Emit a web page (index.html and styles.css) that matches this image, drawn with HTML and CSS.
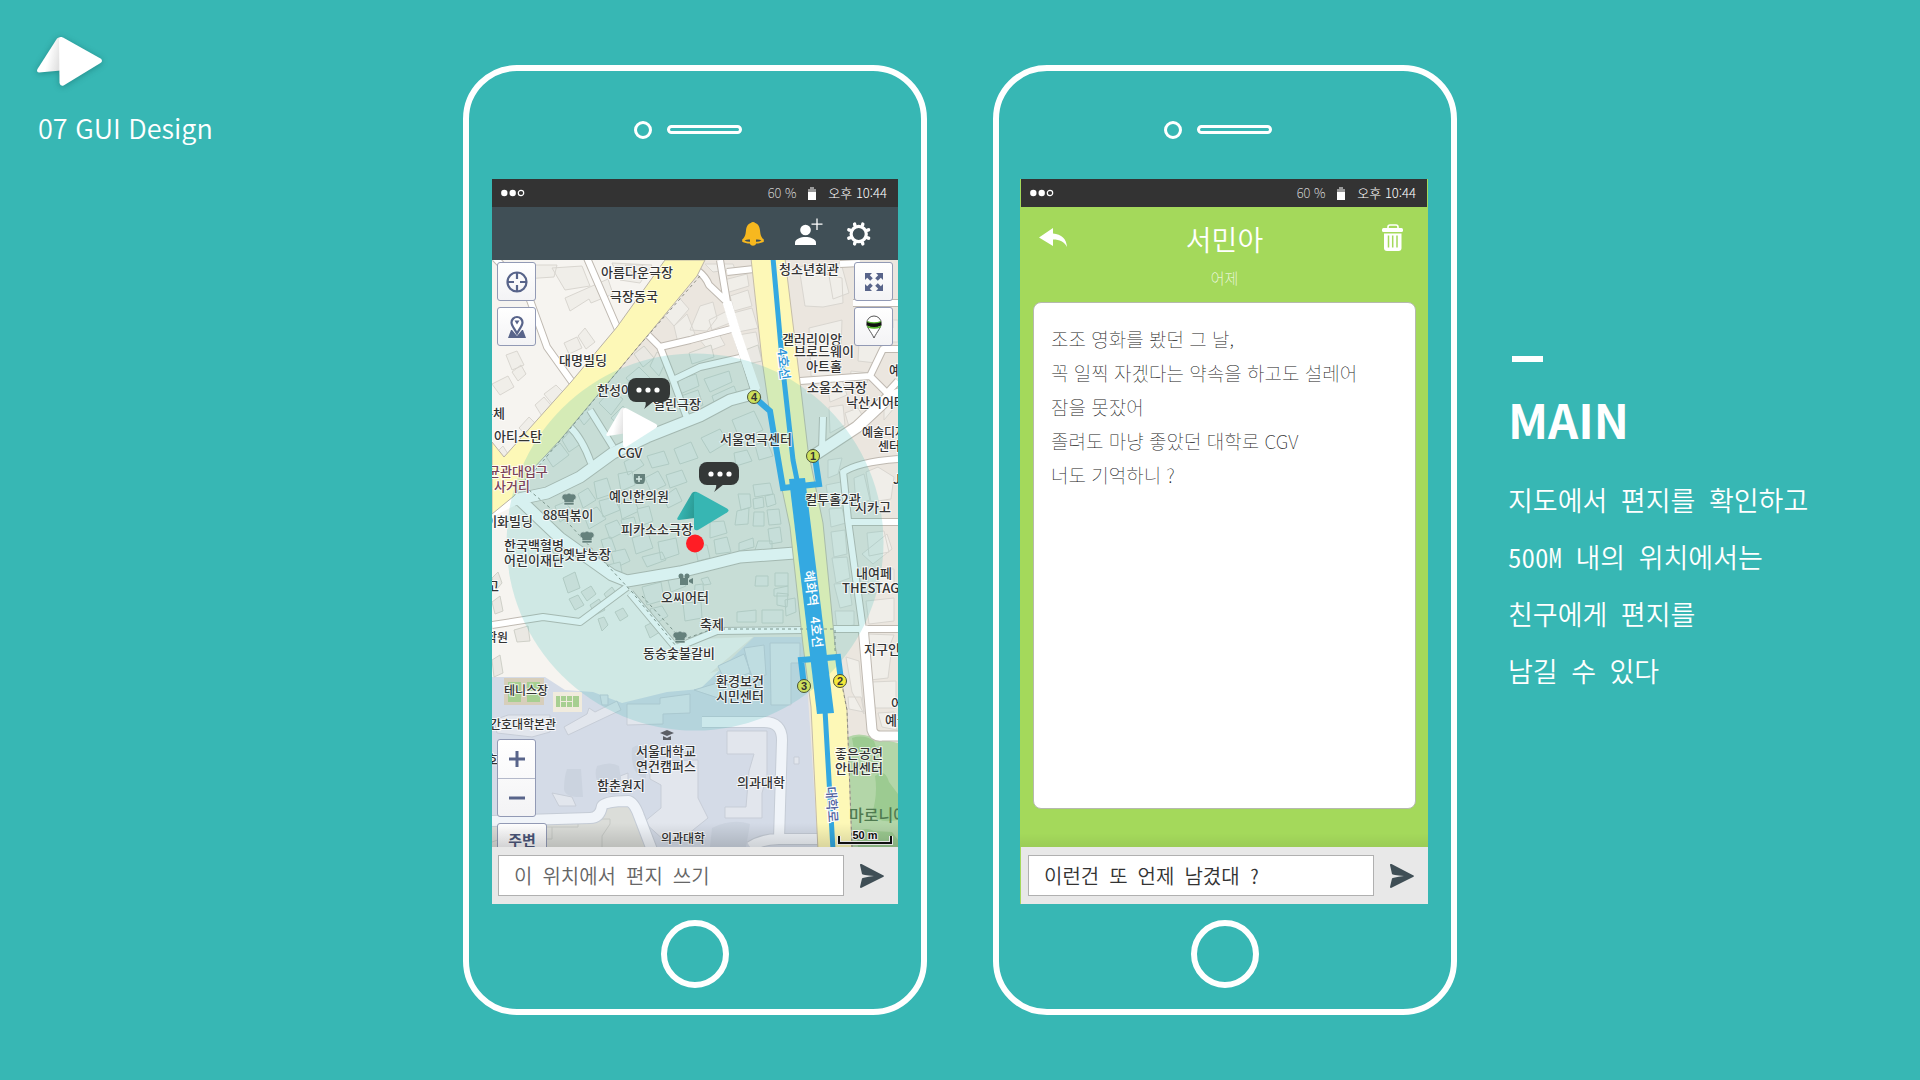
FILE: index.html
```
<!DOCTYPE html>
<html lang="ko">
<head>
<meta charset="utf-8">
<meta name="viewport" content="width=device-width, initial-scale=1">
<title>07 GUI Design</title>
<link rel="stylesheet" href="styles.css">
</head>
<body>
<main class="page">
  <header class="brand">
    <svg class="brand-logo" width="76" height="62" viewBox="31 31 76 62" aria-hidden="true">
      <defs>
        <linearGradient id="fold" x1="0" y1="0" x2="1" y2="0.3"><stop offset="0.55" stop-color="#fff"/><stop offset="1" stop-color="#e2e2e2"/></linearGradient>
        <linearGradient id="foldTeal" x1="0" y1="0" x2="1" y2="0.3"><stop offset="0.3" stop-color="#37b6b3"/><stop offset="1" stop-color="#2b9a94"/></linearGradient>
      </defs>
      <path d="M57 38.500Q59 36.500 62 37L61 70.500L39 72.500Q36 72 37.500 69Z" fill="url(#fold)"/>
      <path d="M59 39Q60 36 63.500 37.800L100.500 58.500Q103.500 60.500 100.500 63L64 85.200Q60.500 87 59.500 83Z" fill="#fff"/>
    </svg>
    <h1 class="brand-title">07 GUI Design</h1>
  </header>

  <div class="phones">
    <section class="phone">
      <div class="phone-top"><span class="camera"></span><span class="speaker"></span></div>
      <div class="screen">
        <div class="status">
          <svg width="24" height="8" viewBox="0 0 24 8" aria-hidden="true"><circle cx="3.300" cy="4" r="3.200" fill="#fff"/><circle cx="11.700" cy="4" r="3.200" fill="#fff"/><circle cx="20" cy="4" r="2.700" fill="none" stroke="#fff" stroke-width="1.200"/></svg>
          <span class="battery-text">60 %</span>
          <svg width="8" height="13" viewBox="0 0 8 13" aria-hidden="true"><path d="M2 0h4v2h2v3H0V2h2z" fill="#999"/><path d="M0 5h8v8H0z" fill="#fff"/></svg>
          <span class="clock">오후 10:44</span>
        </div>
        <div class="toolbar">
          <button class="icon-button" type="button" aria-label="알림">
            <svg width="32" height="32" viewBox="0 0 32 32"><path d="M14 4.700c4.500 0 6.500 3 7 7.500.5 5 1 6.800 3.800 9.300v2.200c-2.300 1.300-4.800 1.700-7.600 1.900-1.200 3-5.200 3-6.400 0-2.800-.2-5.300-.6-7.600-1.900v-2.200c2.800-2.500 3.300-4.300 3.800-9.300.5-4.500 2.500-7.500 7-7.500z" fill="#f7b81f"/><circle cx="14" cy="6.500" r="2.600" fill="#f7b81f"/><path d="M5.500 22.500q2.500-1.500 5.500-1v2.300q-3 .2-5.500-1.300zM22.500 22.500q-2.500-1.500-5.500-1v2.300q3 .2 5.500-1.300z" fill="#404f56"/></svg>
          </button>
          <button class="icon-button" type="button" aria-label="친구 추가">
            <svg width="32" height="32" viewBox="0 0 32 32"><circle cx="14.500" cy="12" r="5.300" fill="#fff"/><path d="M4 27v-2.500c0-3.500 6-5.500 10.500-5.500S25 21 25 24.500V27z" fill="#fff"/><path d="M26 .500v11.500M20.500 6.200h11" stroke="#fff" stroke-width="1.300"/></svg>
          </button>
          <button class="icon-button" type="button" aria-label="설정">
            <svg width="32" height="32" viewBox="0 0 32 32"><g transform="translate(15.700 16)"><circle r="7.600" fill="none" stroke="#fff" stroke-width="3.200"/><g stroke="#fff" stroke-width="3.400" stroke-linecap="round"><path d="M3.800 -8.800l.3 -1.100M8.800 -3.800l1.100 -.4M8.800 3.800l1.100 .4M3.800 8.800l.3 1.100M-3.800 8.800l-.3 1.100M-8.800 3.800l-1.100 .4M-8.800 -3.800l-1.100 -.4M-3.800 -8.800l-.3 -1.100"/></g></g></svg>
          </button>
        </div>

        <div class="map">
          <svg class="map-art" viewBox="0 0 406 587" preserveAspectRatio="xMidYMid slice" role="img" aria-label="혜화역 주변 지도">
            <rect width="406" height="587" fill="#f6f4f0"/>
            <path d="M213 0H406V587H311V385L130 440L110 420L135 320L22 238Z" fill="#ebe6df"/>
            <path d="M22 238L135 325L180 380L261 377L198 430L130 443L53 417L0 417V254Z" fill="#f6f4f0"/>
            <path d="M0 417H53L73 430L101 432L130 443L175 432L208 429L262 377H312L326 587H0Z" fill="#d4dbe7"/>
            <path d="M0 562L105 560L114 544H137L157 587H0Z" fill="#dbddd9"/>
            <path d="M356 477Q366 472 380 477L406 483V587H360Z" fill="#b3d6a8"/>
            <path d="M360 478q12-4 22 3l4 12q-14 4-24-4zM383 516q10-8 14 6l9 12v26q-20 4-26-6 6-20 3-38zM364 574q8-8 18-3l18 1 6 8v7h-40z" fill="#9ccb91"/>
            <g fill="#f0eee9" stroke="#d9d6d0" stroke-width="1">
              <path d="M73 38l43-19 5 15-22 9-2-4-19 12zM72 83l13-6 5 11-13 6zM86 76l7-8 10 14-9 7zM14 95l11-4 7 14-12 5zM20 112l9-7 5 9-8 7zM0 124l16-8 6 11-14 8zM52 134l12-9 12 12-11 13zM43 145l9-8 12 14-11 10zM27 168l10-11 14 14-8 12zM3 194l8-8 5 8-8 9zM17 5h48l-3 12-30 2zM60 8l30-2 8 20-25 4zM120 3l40 2-12 18-20-3z"/>
              <path d="M133 5l18 0-8 11zM168 50l16-16 13 15-15 17zM182 66l13-12 8 20-17 9zM198 70l10-24 13-4 4 16-10 13zM213 4h28l2 5-22 3zM217 60l24-12 2 13-23 9zM232 20l23-6 2 12-23 7zM238 36l18-6 4 16-18 5zM241 53l19-5 6 20-20 4zM246 75l18-3 5 23-18 4zM207 79l10 12 16-6-6-11z"/>
              <path d="M313 46L307 7l15-3 11 10 17 4 1 25-20 4zM317 68l33-8-2 59-29-3zM335 4l14-1 8 30-16 6zM363 52h32v22l-30 7zM367 82l25 1-8 20-18-2zM359 111l18 2-2 10-17-3zM392 138l10-10v20l-10 12zM335 123l15-3 5 15-17 7zM337 147l14-2 2 20-15 8zM353 153l13-5 7 12-15 10zM400 60h6v22h-12zM381 61h20v7h-20z"/>
              <path d="M336 200l14-2-4 16-10 4zM334 225l15-3 5 16-17 6zM337 249l13-1 4 15-15 4zM339 272l14-2 2 24-13 3zM340 298l15-1 3 21-14 5zM342 324l15-1 3 22-12 3zM343 351h19v14l-17 3zM374 212l12-5 16 10-3 22-20 3zM362 218l10-4 6 26-14 5zM370 294l25-20 5 15-19 15zM376 309h26v20l-26 5zM374 341l28-3v23l-25 3zM375 273l17-2 5 21-20 4z"/>
              <path d="M354 397l6 35 12 22-5-53zM356 437h13l3 15-15-3zM376 386h24l-4 32-18 2zM380 422l24-1v27h-21zM386 453l16-1 3 18-15-3zM376 374l26 1-4 10-21-1z"/>
            </g>
            <g fill="#eae8e3" stroke="#cfd0c8" stroke-width="1">
              <path d="M53 195l15-12 9 12-16 12zM70 180l10-11 10 14-13 9zM84 154l10-10 6 12-8 9zM107 143l12-13 12 9-12 16zM119 158l12-12 10 12-8 13zM134 118l13-11 16 16-14 12zM142 94l10-8 10 12-11 9zM165 92l10 7-8 17-9-10zM186 120l18-6 3 12-19 8zM189 136l17-6 5 15-18 8zM212 119l25-8 3 11-22 10zM220 136l22-10 4 10-23 9zM253 90l13-5 4 16-14 3zM197 93l22-8 3 12-22 7z"/>
              <path d="M132 202l13-7 7 10-16 10zM155 196l17-5 5 13-17 4zM182 189l17-7 7 16-18 6zM209 178l19-9 8 13-18 11zM240 160l22-9 9 19-23 10zM126 214l14-3 3 14-14 6zM102 222l13-4 5 16-15 5zM86 234l10-6 8 12-13 8zM63 246l10-4 9 11-14 9zM91 253l14-6 9 12-17 10zM107 241l15-4 6 13-17 7zM127 244l15-5 5 12-17 8zM153 218l13-7 8 14-15 7zM174 215l16-5 5 12-17 6zM171 237l13-9 6 13-14 7z"/>
              <path d="M242 193l13-3 5 11-16 5zM263 185l12-4 6 15-14 4zM246 234h12l1 13-10 3zM245 251l12-3-1 16-13 1zM261 225l17-2 3 11-18 3zM261 239l10-2 1 10-10 2zM273 236l9-2 2 10-9 3zM262 252h10v14h-11zM275 250l12-1 2 15-12 1zM218 262l14-1 3 12-17 5zM203 285h12l3 13-12 3zM222 280l13-3 4 15-15 2zM247 283l14-5 1 9-15 4zM266 281h14v8l-18 4zM276 269l12-2 2 15-12 2z"/>
              <path d="M113 265l12-5 7 12-14 7zM129 260l13-3 4 13-13 5zM145 249l12-3 4 15-12 5zM109 280l10-3 5 14-11 2zM140 278l16-5 5 15-17 6zM166 282l18-4 3 16-18 6zM119 292l14-3 5 12-15 7zM150 297l20-5 4 8-19 7zM150 327l19-5 3 18-17 5zM176 320l14-4 4 10-15 6zM203 325l8-1 1 12-10 3zM209 319l7-2 3 7-7 1zM264 316h12v10h-13zM283 313h13v13h-13zM282 329l14-3v10h-14zM293 340l10-2 1 14-10 4zM285 333l11 1-1 13-10-2zM245 352l19-2v12h-19zM270 350h21v13h-21zM191 343l18-1 1 16-17 3zM158 349l12-3 6 10-13 8z"/>
              <path d="M60 290l9-6 6 9-10 7zM71 318l12-6 5 16-12 5zM77 339l9-4 6 10-9 5zM89 332l10-6 5 8-9 7zM98 345l9-6 6 11-10 5zM106 359l6-2 4 8-6 6zM112 334l8-7 6 9-8 7zM123 352l8-4 5 8-8 5zM116 305l12-3 2 10-13 2zM0 318l6-6 4 11-6 7zM22 370l14-4 2 15-13 1zM0 342l8-6 3 15-8 3zM153 366l8-4 7 10-10 6zM0 400l8-5 3 18-9 4z"/>
            </g>
            <g fill="#e2e6ed" stroke="#c7cdd7" stroke-width="1">
              <path d="M72 467l23-13 2-6 6 4 22-11 4 9-53 25zM135 444h33v-6l30-4v19l-27 1v10l-36 1zM108 435h8v10h-6zM2 460l14-5h42v17l-18 5-35-4zM158 501l48-1v38l10 20-30 24h-12l-22-20 17-14V525l-11-6zM235 471h40v45l-5 17v25h-37v-11h21l3-36 5-17h-27zM302 497h5v7h-5zM202 430l56-17v20l-32 5zM226 406l26-12 9 25-26 6zM252 388l20-3 2 30-15 2zM278 383h30v20h-9v42h-20zM60 533l20 4 4 9h-17zM128 516l8-3v8l-7 2z"/>
            </g>
            <path d="M75 509h14l2 28q-18 1-19-8 0-12 3-20zM105 506q14-5 22 0l4 26q-12 6-22-3-8-12-4-23zM140 488q8-6 14 0v30q-16-2-14-30zM220 568q20-10 38-4l-4 23h-36z" fill="#cbd3df"/>
            <path d="M0 582l20-7 16 2v-10h50v-8h32v5l-8 12v14h32M60 567v12h-28" fill="none" stroke="#c6c9c5"/>
            <path d="M12 418h40v27H12z" fill="#d7cebb"/><path d="M61 432h29v20H61z" fill="#f0ebdd"/>
            <g fill="#a7cf91"><path d="M16 422h13v20H16zM35 422h13v20H35zM64 436h4v11h-4zM69 436h5v5h-5zM75 436h5v5h-5zM81 436h6v11h-6zM69 442h5v5h-5zM75 442h5v5h-5z"/></g>
            <path d="M16 432h32" stroke="#f5f5ea" stroke-width="2"/>

            <g fill="none" stroke-linejoin="round">
              <path class="road-edge" stroke-width="8" d="M3 -2L22 18L38 40L55 87L80 122M95 -2L127 72M205 10Q214 17 217 25L235 42L228 0M235 12L262 9M235 42L244 72L262 130M243 68L198 80L168 87L156 75M168 87L181 120L195 158M181 120L208 107L248 98M98 150L121 187M78 167Q90 178 99 203M0 365L51 357L88 362L135 327M308 121L378 116L391 89H406M378 116L395 133L406 121M350 213Q365 202 406 199M351 211L356 260L371 370M356 262H406M361 43H406M348 4L368 3M331 157L330 190M340 369H406M138 333L184 388Q198 382 225 371L312 370"/>
              <path class="road-edge" stroke-width="13" d="M22 240L55 233L88 217L121 193L155 177L208 156L238 140L268 132M28 240L68 278L120 315L135 321L188 312L248 297L303 293M318 198L365 167L396 138L410 133"/>
              <path class="road-edge" stroke-width="11" d="M371 366L380 470Q382 477 390 476H410"/>
              <path class="campus-edge" stroke-width="12" d="M210 462L272 462Q290 462 290 480L287 579H326M258 587Q270 579 287 579M0 561L98 558Q108 558 110 546Q113 541 136 541Q142 542 147 556L160 590"/>
              <path class="road-fill" stroke-width="6" d="M3 -2L22 18L38 40L55 87L80 122M95 -2L127 72M205 10Q214 17 217 25L235 42L228 0M235 12L262 9M235 42L244 72L262 130M243 68L198 80L168 87L156 75M168 87L181 120L195 158M181 120L208 107L248 98M98 150L121 187M78 167Q90 178 99 203M0 365L51 357L88 362L135 327M308 121L378 116L391 89H406M378 116L395 133L406 121M350 213Q365 202 406 199M351 211L356 260L371 370M356 262H406M361 43H406M348 4L368 3M331 157L330 190M340 369H406M138 333L184 388Q198 382 225 371L312 370"/>
              <path class="road-fill" stroke-width="11" d="M22 240L55 233L88 217L121 193L155 177L208 156L238 140L268 132M28 240L68 278L120 315L135 321L188 312L248 297L303 293M318 198L365 167L396 138L410 133"/>
              <path class="campus-fill" stroke-width="10" d="M210 462L272 462Q290 462 290 480L287 579H326M258 587Q270 579 287 579M0 561L98 558Q108 558 110 546Q113 541 136 541Q142 542 147 556L160 590"/>
              <path class="road-fill" stroke-width="9" d="M371 366L380 470Q382 477 390 476H410M0 252L24 240M235 42L244 72L264 130"/>
            </g>
            <path d="M173 0H213L205 16L156 75L68 180L40 210L22 236L0 254V182L12 197L79 122L125 67Z" fill="#fdf8b7" stroke="#b9b2a6"/>
            <path d="M259 -2H293L309 130L316 190L331 263L343 385L355 450L360 590H326L319 447L311 385L298 267L286 210L270 100Z" fill="#fdf8b7" stroke="#c5bda9"/>
            <g fill="none" stroke="#8e8e84" stroke-dasharray="3 3"><path d="M208 16L145 88L72 176L40 214M37 230L78 265L140 332L184 386M230 369H343V390L355 450L360 587M150 336L190 380L218 370"/></g>

            <circle cx="203" cy="282" r="188.500" fill="#37b7b4" fill-opacity=".2"/>

            <g fill="none" stroke="#34a9e1" stroke-width="5"><path d="M281 -2L291 110L301 200L306 225M333 450L341 590"/><path stroke-width="6" d="M262 137L278 151L284 187L291 228L327 224L323 197M312 426L309 400L346 397L349 420"/></g>
            <path d="M297 219L313 218L342 453L325 454Z" fill="#34a9e1"/>
            <g class="exit"><circle cx="262" cy="137" r="6.500"/><circle cx="321" cy="196" r="6.500"/><circle cx="312" cy="426" r="6.500"/><circle cx="348" cy="421" r="6.500"/>
              <text x="262" y="141">4</text><text x="321" y="200">1</text><text x="312" y="430">3</text><text x="348" y="425">2</text></g>

            <defs><g id="chef"><path d="M-4 6v-5q-3-1-2-4t5-2q2-2 4 0 4-1 5 2t-2 4v5zM-4 3.500h10" fill="#65817c" stroke="#d8ebe6" stroke-width=".6"/></g></defs>
            <use href="#chef" x="76" y="239"/><use href="#chef" x="94" y="277"/><use href="#chef" x="187" y="377"/>
            <g fill="#65817c"><path d="M142 214h11v5q0 5-3 5h-5q-3 0-3-5z"/><path d="M188 318h8v7h-8zM197 320l4-2v6l-4-2z"/><circle cx="189" cy="316" r="2.500"/><circle cx="195" cy="316" r="2.500"/></g>
            <path d="M147 216v6M144 219h6" stroke="#d8ebe6" stroke-width="1.500"/>
            <path d="M168 473l7-3 7 3-7 3zM171 476l4 2 4-2v4h-8z" fill="#5c5f66"/>

            <g class="label middle">
              <text x="145" y="17">아름다운극장</text><text x="142" y="41">극장동국</text><text x="91" y="105">대명빌딩</text>
              <text x="135" y="135">한성아트홀</text><text x="185" y="149">열린극장</text><text x="138" y="198">CGV</text>
              <text x="26" y="181">아티스탄</text><text x="317" y="14">청소년회관</text><text x="320" y="84">갤러리이앙</text>
              <text x="332" y="96">브로드웨이</text><text x="332" y="111">아트홀</text><text x="345" y="132">소울소극장</text>
              <text x="264" y="184">서울연극센터</text><text x="147" y="241">예인한의원</text><text x="76" y="260">88떡볶이</text>
              <text x="42" y="290">한국백혈병</text><text x="42" y="305">어린이재단</text><text x="95" y="299">옛날농장</text>
              <text x="165" y="274">피카소소극장</text><text x="193" y="342">오씨어터</text><text x="341" y="244">컬투홀2관</text>
              <text x="381" y="252">시카고</text><text x="382" y="318">내여페</text><text x="220" y="369">축제</text>
              <text x="187" y="398">동숭숯불갈비</text><text x="248" y="426">환경보건</text><text x="248" y="441">시민센터</text>
              <text x="269" y="527">의과대학</text><text x="367" y="498">좋은공연</text><text x="367" y="513">안내센터</text>
              <text x="174" y="496">서울대학교</text><text x="174" y="511">연건캠퍼스</text><text x="129" y="530">함춘원지</text>
            </g>
            <g class="label">
              <text x="354" y="147">낙산시어터</text><text x="397" y="115">예술</text><text x="401" y="224">JS</text>
              <text x="350" y="333">THESTAGE</text><text x="372" y="394">지구인</text><text x="399" y="448">어린이</text><text x="393" y="465">예술</text>
            </g>
            <g class="label end"><text x="13" y="158">구체</text><text x="41" y="266">이화빌딩</text><text x="7" y="331">고</text><text x="6" y="504">호</text></g>
            <g class="label small middle"><text x="34" y="435">테니스장</text><text x="31" y="469">간호대학본관</text><text x="191" y="583">의과대학</text></g>
            <g class="label small"><text x="370" y="177">예술디자인</text><text x="386" y="191">센터</text></g>
            <g class="label small end"><text x="16" y="382">학원</text></g>
            <g class="label district"><text x="-4" y="216">균관대입구</text><text x="2" y="231">사거리</text></g>
            <text class="park" x="357" y="561">마로니에</text>
            <g class="line-label">
              <text class="line-blue" transform="translate(285 89) rotate(83)">4호선</text>
              <text class="line-white" transform="translate(312 311) rotate(83)">혜화역</text>
              <text class="line-white" transform="translate(318 357) rotate(84)">4호선</text>
              <text class="line-road" transform="translate(334 527) rotate(86)">대학로</text>
            </g>

            <rect x="136" y="118" width="42" height="24" rx="8" class="bubble"/><path d="M153 141h9l-10 8q3-5 1-8z" class="bubble"/>
            <g fill="#fff"><circle cx="147" cy="130" r="2.600"/><circle cx="156" cy="130" r="2.600"/><circle cx="165" cy="130" r="2.600"/></g>
            <rect x="207" y="202" width="40" height="23" rx="8" class="bubble"/><path d="M224 224h8l-10 8q3-5 2-8z" class="bubble"/>
            <g fill="#fff"><circle cx="219" cy="214" r="2.600"/><circle cx="228" cy="214" r="2.600"/><circle cx="237" cy="214" r="2.600"/></g>
            <path d="M129 149Q131 147 134 148L132 173.500L116 176Q113 176 115 173Z" fill="url(#fold)"/>
            <path d="M131 150Q132 147 135 148.500L164 164Q166.500 166 164 168L134 187Q131 188 131 184Z" fill="#fff"/>
            <path d="M200 233Q202 231 205 232L203 258L187 260Q184 260 186 257Z" fill="url(#foldTeal)"/>
            <path d="M202 234Q203 231 206 232.500L235 248.500Q238 250.500 235 252.500L206 270Q202 271 202 268Z" fill="#37b6b3"/>
            <circle cx="203" cy="283.500" r="9" fill="#ff1d25"/>
            <path d="M347 576v7h52v-7" fill="none" stroke="#fff" stroke-width="4"/><path d="M347 576v7h52v-7" fill="none" stroke="#111" stroke-width="2"/>
            <text class="scale" x="373" y="579">50 m</text>
          </svg>
          <div class="controls controls-left">
            <button class="map-button" type="button" aria-label="현재 위치"><svg width="24" height="24" viewBox="0 0 24 24" fill="none" stroke="#58648a" stroke-width="2.200"><circle cx="12" cy="12" r="9.500"/><path d="M12 3v6M12 15v6M3 12h6M15 12h6"/></svg></button>
            <button class="map-button" type="button" aria-label="거리뷰"><svg width="24" height="24" viewBox="0 0 24 24"><path d="M7 15H6l-3 8h18l-3-8h-1l-5 6z" fill="#58648a"/><path d="M12 2a5.500 5.500 0 0 1 5.500 5.500c0 3-2.500 5.500-5.500 11-3-5.500-5.500-8-5.500-11A5.500 5.500 0 0 1 12 2z" fill="#fff" stroke="#58648a" stroke-width="2.200"/><path d="M9.500 5.500h5l-2.500 4z" fill="#58648a"/></svg></button>
          </div>
          <div class="controls controls-right">
            <button class="map-button" type="button" aria-label="전체 화면"><svg width="24" height="24" viewBox="0 0 24 24"><path d="M3 3h7L7.800 5.200l3 3-2.600 2.600-3-3L3 10zM21 3v7l-2.200-2.200-3 3-2.600-2.600 3-3L14 3zM3 21v-7l2.200 2.200 3-3 2.600 2.600-3 3L10 21zM21 21h-7l2.200-2.200-3-3 2.600-2.600 3 3L21 14z" fill="#58648a"/></svg></button>
            <button class="map-button" type="button" aria-label="지도 표시"><svg width="24" height="24" viewBox="0 0 24 24"><path d="M12 1a7.300 7.300 0 0 1 7.300 7.500c0 4-4.300 8-7.300 14.500C9 16.500 4.700 12.500 4.700 8.500A7.300 7.300 0 0 1 12 1z" fill="#fff" stroke="#555"/><path d="M5 6.500q7 3 14 0l.2 4q-7 4-14.400 0z" fill="#111"/><path d="M5 10.500q7 3 14.200 0l-.8 2.300q-6 2-12.600 0zM5.200 6q7 2.500 13.600 0v1.200q-7 2.500-13.600 0z" fill="#55b52f"/></svg></button>
          </div>
          <div class="controls controls-bottom">
            <div class="zoom">
              <button class="zoom-button" type="button" aria-label="확대"><svg width="18" height="18" viewBox="0 0 18 18"><path d="M1 9h16M9 1v16" stroke="#58648a" stroke-width="3"/></svg></button>
              <button class="zoom-button" type="button" aria-label="축소"><svg width="18" height="18" viewBox="0 0 18 18"><path d="M1 9h16" stroke="#58648a" stroke-width="3"/></svg></button>
            </div>
            <button class="nearby" type="button">주변</button>
          </div>
        </div>

        <form class="compose">
          <input class="compose-input" type="text" placeholder="이 위치에서 편지 쓰기" aria-label="편지 쓰기">
          <button class="send" type="button" aria-label="보내기"><svg width="24" height="24" viewBox="0 0 24 24"><path d="M0 1Q0-.5 1.500 0L23.500 11.500Q24.500 12 23.500 12.800L1 24Q0 24 0 23L2 14.500Q2 13.500 14 12Q2 11 2 10Z" fill="#404f56"/></svg></button>
        </form>
      </div>
      <div class="phone-bottom"><button class="home" type="button" aria-label="홈"></button></div>
    </section>

    <section class="phone">
      <div class="phone-top"><span class="camera"></span><span class="speaker"></span></div>
      <div class="screen screen-letter">
        <div class="status">
          <svg width="24" height="8" viewBox="0 0 24 8" aria-hidden="true"><circle cx="3.300" cy="4" r="3.200" fill="#fff"/><circle cx="11.700" cy="4" r="3.200" fill="#fff"/><circle cx="20" cy="4" r="2.700" fill="none" stroke="#fff" stroke-width="1.200"/></svg>
          <span class="battery-text">60 %</span>
          <svg width="8" height="13" viewBox="0 0 8 13" aria-hidden="true"><path d="M2 0h4v2h2v3H0V2h2z" fill="#999"/><path d="M0 5h8v8H0z" fill="#fff"/></svg>
          <span class="clock">오후 10:44</span>
        </div>
        <div class="letter">
          <div class="letter-head">
            <button class="icon-button" type="button" aria-label="답장"><svg width="28" height="32" viewBox="0 0 28 32"><path d="M0 14.500L14 5v5.500c8.500.5 13.500 5.500 14 13.500-3-5.500-7-7.500-14-7.500V23z" fill="#fff"/></svg></button>
            <div class="letter-who"><h2 class="letter-name">서민아</h2><p class="letter-date">어제</p></div>
            <button class="icon-button" type="button" aria-label="삭제"><svg width="22" height="32" viewBox="0 0 22 32"><path d="M6 6V4q0-2 2-2h6q2 0 2 2v2" fill="none" stroke="#fff" stroke-width="1.600"/><rect x="0" y="5" width="21" height="4" rx="1.500" fill="#fff"/><path d="M2 10.500h17.500V25q0 3-3 3H5q-3 0-3-3z" fill="#fff"/><path d="M6.500 12.500v12M10.700 12.500v12M15 12.500v12" stroke="#a4d95b" stroke-width="1.500"/></svg></button>
          </div>
          <article class="letter-card">
            <p>조조 영화를 봤던 그 날,<br>꼭 일찍 자겠다는 약속을 하고도 설레어<br>잠을 못잤어<br>졸려도 마냥 좋았던 대학로 CGV<br>너도 기억하니 ?</p>
          </article>
        </div>
        <form class="compose">
          <input class="compose-input" type="text" value="이런건 또 언제 남겼대 ?" aria-label="답장 쓰기">
          <button class="send" type="button" aria-label="보내기"><svg width="24" height="24" viewBox="0 0 24 24"><path d="M0 1Q0-.5 1.500 0L23.500 11.500Q24.500 12 23.500 12.800L1 24Q0 24 0 23L2 14.500Q2 13.500 14 12Q2 11 2 10Z" fill="#404f56"/></svg></button>
        </form>
      </div>
      <div class="phone-bottom"><button class="home" type="button" aria-label="홈"></button></div>
    </section>
  </div>

  <aside class="about">
    <h2 class="about-title">MAIN</h2>
    <p class="about-text">지도에서 편지를 확인하고<br>500M 내의 위치에서는<br>친구에게 편지를<br>남길 수 있다</p>
  </aside>
</main>
</body>
</html>
```
FILE: styles.css
```
* { box-sizing: border-box; }

body {
  margin: 0;
  background: #37b7b4;
  color: #fff;
  font-family: "Noto Sans CJK KR", "Noto Sans", sans-serif;
}

h1, h2, p { margin: 0; }

button {
  margin: 0;
  padding: 0;
  border: 0;
  background: none;
  font-family: inherit;
  cursor: pointer;
}

svg { display: block; }

.page {
  display: grid;
  grid-template-columns: 1fr auto 1fr;
  column-gap: 51px;
  min-height: 100vh;
  align-items: start;
}

.brand { padding: 31px 0 0 31px; }
.brand-logo { filter: drop-shadow(0 1px 3px rgba(0, 60, 60, .35)); }
.brand-title {
  padding: 15px 0 0 7px;
  font-size: 27px;
  font-weight: 350;
  line-height: 40px;
}

.phones {
  display: flex;
  gap: 66px;
  padding: 65px 0;
}

.phone {
  width: 464px;
  border: 6px solid #fff;
  border-radius: 54px;
}

.phone-top {
  display: flex;
  align-items: center;
  gap: 15px;
  height: 108px;
  padding: 9px 0 0 165px;
}
.camera {
  width: 18px;
  height: 18px;
  border: 3px solid #fff;
  border-radius: 50%;
}
.speaker {
  width: 75px;
  height: 9px;
  border: 3px solid #fff;
  border-radius: 5px;
}

.phone-bottom {
  display: flex;
  justify-content: center;
  padding: 16px 0 21px;
}
.home {
  width: 68px;
  height: 68px;
  border: 6px solid #fff;
  border-radius: 50%;
}

.screen { margin: 0 23px; }
.screen-letter {
  margin-left: 21px;
  background: #a4d95b;
}
.screen-letter .status { margin: 0 1px; }
.screen-letter .compose {
  margin-left: 1px;
  padding-left: 7px;
}

.status {
  display: flex;
  align-items: center;
  height: 28px;
  padding: 0 11px 0 9px;
  background: #333;
  font-size: 13px;
  line-height: 28px;
}
.battery-text {
  margin: 0 12px 0 auto;
  font-weight: 100;
}
.clock {
  margin-left: 12px;
  font-weight: 300;
}

.toolbar {
  display: flex;
  justify-content: flex-end;
  align-items: center;
  gap: 20px;
  height: 53px;
  padding-right: 23px;
  background: #404f56;
}

.map {
  position: relative;
  height: 587px;
  overflow: hidden;
}
.map-art { width: 100%; height: 100%; }
.map::after, .letter::after {
  content: "";
  position: absolute;
  inset: auto 0 0;
  height: 24px;
  background: linear-gradient(rgba(0, 0, 0, 0), rgba(0, 0, 0, .14));
  pointer-events: none;
}
.letter::after {
  height: 14px;
  background: linear-gradient(rgba(0, 0, 0, 0), rgba(0, 0, 0, .06));
}

.road-edge { stroke: #bfb9b1; }
.road-fill { stroke: #fff; }
.campus-edge { stroke: #c5ccd6; }
.campus-fill { stroke: #f0f4f9; }

.label, .line-label, .park {
  fill: #333;
  stroke: rgba(255, 255, 255, .75);
  stroke-width: 2px;
  paint-order: stroke;
  font-size: 13px;
  font-weight: 500;
}
.small { font-size: 12px; }
.middle { text-anchor: middle; }
.end { text-anchor: end; }
.district { fill: #7b4257; }
.park { fill: #4f7a50; stroke: none; font-size: 16px; }
.line-blue { fill: #2b93d6; stroke: #fff; }
.line-white { fill: #fff; stroke: none; }
.line-road { fill: #5364a0; stroke: #fff; }
.exit circle { stroke: #4a5236; fill: #cde05c; }
.exit circle:last-of-type { fill: #f4e83a; }
.exit text {
  fill: #333;
  font: 700 11px "Liberation Sans", sans-serif;
  text-anchor: middle;
}
.bubble { fill: #343837; }
.scale {
  fill: #111;
  stroke: #fff;
  stroke-width: 2px;
  paint-order: stroke;
  font: 700 11px "Liberation Sans", sans-serif;
  text-anchor: middle;
}

.controls {
  position: absolute;
  display: flex;
  flex-direction: column;
  gap: 6px;
}
.controls-left { top: 2px; left: 5px; }
.controls-right { top: 2px; right: 5px; }
.controls-bottom { top: 479px; left: 5px; }

.map-button, .zoom, .nearby {
  border: 1px solid #929ab5;
  border-radius: 3px;
  background: linear-gradient(#fff, #f3f3f5);
}
.map-button, .zoom-button {
  display: flex;
  align-items: center;
  justify-content: center;
}
.map-button { width: 39px; height: 39px; }
.zoom { width: 39px; }
.zoom-button { width: 100%; height: 38px; }
.zoom-button + .zoom-button { border-top: 1px solid #b4b9ca; }
.nearby {
  width: 50px;
  height: 32px;
  color: #4b5679;
  font-size: 15px;
  font-weight: 700;
}

.compose {
  display: flex;
  align-items: center;
  gap: 16px;
  height: 57px;
  padding: 0 14px 0 6px;
  background: #e8e8e8;
}
.compose-input {
  flex: 1;
  min-width: 0;
  height: 41px;
  padding: 0 15px;
  border: 1px solid #b0b0b0;
  border-radius: 0;
  background: #fff;
  color: #333;
  font-family: inherit;
  font-size: 20px;
  font-weight: 350;
  font-feature-settings: "hwid";
}
.compose-input::placeholder { color: #666; opacity: 1; }

.letter {
  position: relative;
  height: 640px;
  padding: 0 12px 38px 13px;
  display: flex;
  flex-direction: column;
}
.letter-head {
  display: flex;
  align-items: flex-start;
  justify-content: space-between;
  height: 95px;
  padding: 16px 12px 0 6px;
}
.letter-who { text-align: center; }
.letter-name {
  margin-top: -2px;
  font-size: 28px;
  font-weight: 350;
  line-height: 36px;
}
.letter-date {
  padding-top: 9px;
  color: #fff;
  font-size: 15px;
  font-weight: 100;
  line-height: 24px;
}
.letter-card {
  flex: 1;
  padding: 19px 17px;
  border: 1px solid #b5b9ae;
  border-radius: 8px;
  background: #fff;
  color: #222;
  font-size: 19px;
  font-weight: 100;
  line-height: 34px;
}

.about { padding-top: 356px; }
.about::before {
  content: "";
  display: block;
  width: 31px;
  height: 6px;
  margin-left: 4px;
  background: #fff;
}
.about-title {
  padding-top: 22px;
  font-size: 47px;
  font-weight: 700;
  line-height: 70px;
}
.about-text {
  padding-top: 17px;
  font-size: 27px;
  font-weight: 350;
  line-height: 57px;
  font-feature-settings: "hwid";
}
```
